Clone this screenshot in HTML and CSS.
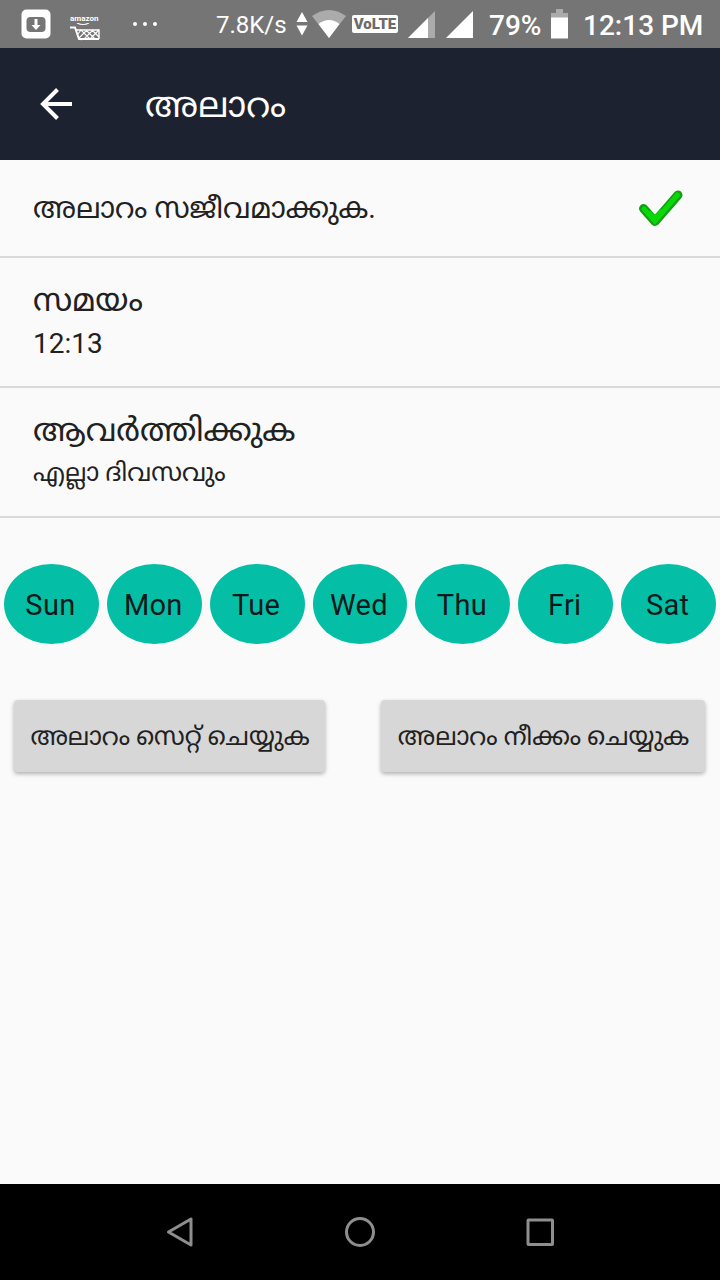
FILE: index.html
```html
<!DOCTYPE html>
<html lang="ml">
<head>
  <meta charset="UTF-8">
  <meta name="viewport" content="width=device-width, initial-scale=1.0">
  <title>അലാറം</title>
  <link rel="stylesheet" href="styles.css">
</head>
<body>
  <!-- status bar -->
  <div class="status-bar">
    <div class="status-left">
      <svg class="download" width="30" height="30" viewBox="0 0 30 30">
        <rect x="0.5" y="0.5" width="29" height="29" rx="5" fill="#fff"/>
        <rect x="5.500" y="8" width="19" height="15" rx="4" fill="#757575"/>
        <path d="M15 10v8" stroke="#fff" stroke-width="3"/>
        <path d="M10.500 16h9L15 21z" fill="#fff"/>
      </svg>
      <div class="shop">
        <span>amazon</span>
        <svg width="30" height="18" viewBox="0 0 30 18" fill="none" stroke="#fff">
          <path d="M7 0q6 3 12 0" stroke-width="1.200"/>
          <path d="M0 4.500h5l4 11.500h20" stroke-width="2"/>
          <path d="M6 7h23v9" stroke-width="1.400"/>
          <path d="M8 11l3-4 9 9M9 14l3 3M16 7l9 9M22 7l7 7M9 15l8-8M14 16l9-9M20 16l9-9" stroke-width="1.100"/>
        </svg>
      </div>
      <svg class="dots" width="26" height="6" viewBox="0 0 26 6" fill="#fff">
        <circle cx="3" cy="3" r="2"/><circle cx="13" cy="3" r="2"/><circle cx="23" cy="3" r="2"/>
      </svg>
    </div>
    <div class="status-right">
      <div class="speed">7.8K/s</div>
      <svg class="updown" width="12" height="24" viewBox="0 0 12 24" fill="#fff">
        <path d="M6 0l5.500 10H0.500zM0.500 13.500h11L6 23.500z"/>
      </svg>
      <svg class="wifi" width="34" height="28" viewBox="0 0 34 28">
        <path d="M0 6Q17-6 34 6L17 28z" fill="#ababab"/>
        <path d="M6.500 14Q17 6 27.500 14L17 28z" fill="#fff"/>
      </svg>
      <div class="volte">VoLTE</div>
      <svg class="signal" width="27" height="27" viewBox="0 0 27 27">
        <path d="M0 27L27 0v27z" fill="#ababab"/>
        <path d="M0 27L20 7v20z" fill="#fff"/>
      </svg>
      <svg class="signal-full" width="27" height="27" viewBox="0 0 27 27">
        <path d="M0 27L27 0v27z" fill="#fff"/>
      </svg>
      <div class="percent">79%</div>
      <svg class="battery" width="17" height="30" viewBox="0 0 17 30">
        <path d="M0 9V4h5V0h7v4h5v5z" fill="#ababab"/>
        <path d="M0 8.500h17V29.500H0z" fill="#fff"/>
      </svg>
      <div class="clock">12:13 PM</div>
    </div>
  </div>

  <!-- header -->
  <div class="header">
    <svg width="32" height="32" viewBox="0 0 32 32" fill="none" stroke="#fff" stroke-width="4">
      <path d="M17.500 1.500L3 16l14.500 14.500M3 16h29"/>
    </svg>
    <h1 class="title">അലാറം</h1>
  </div>

  <div class="content">
    <div class="row row-active">
      <div class="name">അലാറം സജീവമാക്കുക.</div>
      <svg width="46" height="40" viewBox="0 0 46 40">
        <path d="M5.500 20.500L17 33.500L40 7" fill="none" stroke="#12a012" stroke-width="9" stroke-linecap="round" stroke-linejoin="round"/>
        <path d="M6 21L17 33L39.500 7" fill="none" stroke="#08d808" stroke-width="5" stroke-linecap="round"/>
        <path d="M11 24l6 6 7-8" fill="none" stroke="#08d808" stroke-width="4"/>
      </svg>
    </div>
    <div class="row">
      <div class="name name-big">സമയം</div>
      <div class="value value-time">12:13</div>
    </div>
    <div class="row">
      <div class="name name-big">ആവർത്തിക്കുക</div>
      <div class="value">എല്ലാ ദിവസവും</div>
    </div>

    <div class="days">
      <div class="day">Sun</div>
      <div class="day">Mon</div>
      <div class="day">Tue</div>
      <div class="day">Wed</div>
      <div class="day">Thu</div>
      <div class="day">Fri</div>
      <div class="day">Sat</div>
    </div>

    <div class="buttons">
      <button class="btn btn-set">അലാറം സെറ്റ് ചെയ്യുക</button>
      <button class="btn btn-remove">അലാറം നീക്കം ചെയ്യുക</button>
    </div>
  </div>

  <!-- navigation bar -->
  <div class="nav-bar">
    <svg width="32" height="32" viewBox="0 0 32 32"><path d="M4.500 16L27 3v26z"/></svg>
    <svg width="32" height="32" viewBox="0 0 32 32"><circle cx="16" cy="16" r="13.500"/></svg>
    <svg width="32" height="32" viewBox="0 0 32 32"><rect x="4" y="4" width="24.500" height="24.500" rx="0.500"/></svg>
  </div>
</body>
</html>
```
FILE: styles.css
```css
* {margin:0; padding:0; box-sizing:border-box;}
body {
  width:720px; height:1280px; overflow:hidden;
  display:flex; flex-direction:column;
  font-family: Roboto, "Noto Sans Malayalam", "Noto Sans", sans-serif;
  background:#fafafa; color:#212121;
}
svg {display:block; flex:none;}

.status-bar {
  height:48px; padding:0 17px 0 21px;
  display:flex; justify-content:space-between; align-items:center;
  background:#757575; color:#fff; white-space:nowrap;
}
.status-left, .status-right {display:flex; align-items:center;}
.shop {width:30px; margin:0 32px 0 19px; padding-top:6px;}
.shop span {display:block; font-size:8px; font-weight:700; line-height:9px;}
.speed {width:72px; padding-top:2px; font-size:24px;}
.updown {margin:0 4px 0 8px;}
.volte {
  width:46px; height:18px; margin:0 10px 0 6px; border-radius:2px;
  background:#fff; color:#6b6b6b;
  font-size:15px; font-weight:900; line-height:18px; text-align:center;
}
.signal-full {margin:0 16px 0 11px;}
.percent {width:52px; margin-right:10px; padding-top:2px; font-size:28px; font-weight:500;}
.clock {width:120px; margin-left:15px; padding-top:2px; font-size:28px; font-weight:500;}

.header {
  height:112px; padding-left:40px;
  display:flex; align-items:center; gap:73px;
  background:#1d2230; color:#fff;
}
.title {padding-top:2px; font-size:35.4px; font-weight:400; line-height:40px;}

.content {flex:1;}
.row {
  height:130px; padding:22px 32px 0 33px; border-bottom:2px solid #dadada;
  white-space:nowrap;
}
.row-active {
  height:98px; padding:0 36px 0 33px;
  display:flex; justify-content:space-between; align-items:center;
}
.name {font-size:28.7px; line-height:40px;}
.name-big {font-size:32px;}
.value {padding-top:1px; font-size:25.1px; line-height:44px;}
.value-time {padding-top:2px; font-size:28px;}

.days {display:flex; padding-top:46px;}
.day {
  flex:1; height:80px; margin:0 4px; padding-right:2px; border-radius:50%;
  background:#04bfa5; color:#10191a;
  font-size:29px; line-height:83px; letter-spacing:0.3px; text-align:center;
}

.buttons {display:flex; justify-content:space-between; padding:56px 15px 0 14px;}
.btn {
  height:72px; padding:4px 0 0 1px; border:0; border-radius:4px;
  background:#d7d7d7; color:#212121;
  box-shadow:0 2px 4px rgba(0,0,0,0.3);
  font-family:inherit; font-size:25px; white-space:nowrap;
}
.btn-set {width:311px;}
.btn-remove {width:324px;}

.nav-bar {
  height:96px; padding:0 164px;
  display:flex; justify-content:space-between; align-items:center;
  background:#000;
}
.nav-bar svg {fill:none; stroke:#8e8e8e; stroke-width:3; stroke-linejoin:round;}
```
